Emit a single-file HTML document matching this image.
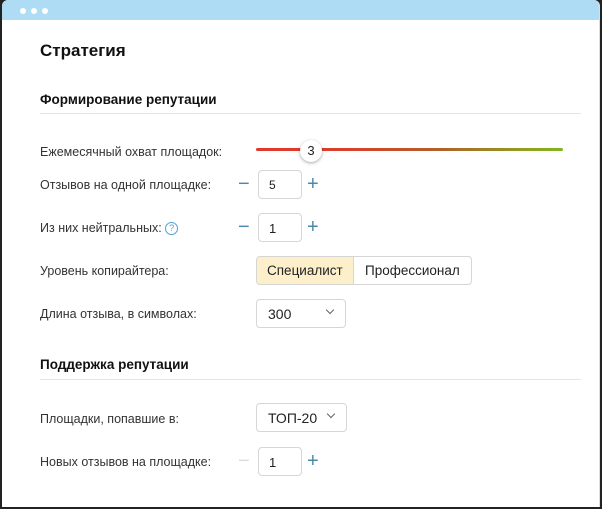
<!DOCTYPE html>
<html><head><meta charset="utf-8"><style>
*{margin:0;padding:0;box-sizing:border-box}
body{width:602px;height:509px;background:#222;font-family:"Liberation Sans",Arial,sans-serif;position:relative;overflow:hidden}
.win{position:absolute;left:2px;top:0;width:598px;height:507px;background:#fff;border-right:1px solid #ddd;border-radius:6px 6px 0 0;overflow:hidden}
.bar{position:absolute;left:0;top:0;right:0;height:20px;background:#aedcf5}
.dot{position:absolute;top:8px;width:6px;height:6px;border-radius:50%;background:#fff}
.abs{position:absolute}
.h1{left:38px;top:41px;font-size:17px;font-weight:bold;color:#111}
.h2{font-size:13.5px;font-weight:bold;color:#111;left:38px}
.hr{left:38px;width:541px;height:1px;background:#dde5ee}
.lbl{left:38px;font-size:12.5px;color:#333}
.inp{width:44px;height:29px;border:1px solid #d6d6d6;border-radius:4px;font-size:13px;color:#222;padding:7px 0 0 10px}
.pm{font-size:20px;color:#4a8aa8;line-height:20px}
.sel{height:29px;border:1px solid #d6d6d6;border-radius:4px;font-size:14px;color:#222;padding:6px 0 0 11px}
.chev{position:absolute;right:12px;top:7px;width:6px;height:6px;border-right:1.2px solid #666;border-bottom:1.2px solid #666;transform:rotate(45deg)}
</style></head><body>
<div class="win">
<div class="bar"><div class="dot" style="left:18px"></div><div class="dot" style="left:29px"></div><div class="dot" style="left:40px"></div></div>
<div class="abs h1">Стратегия</div>
<div class="abs h2" style="top:92px">Формирование репутации</div>
<div class="abs hr" style="top:113px"></div>
<div class="abs lbl" style="top:145px">Ежемесячный охват площадок:</div>
<div class="abs" style="left:254px;top:148px;width:307px;height:3px;border-radius:2px;background:linear-gradient(90deg,#e0392a 0%,#d8402a 30%,#b0602a 60%,#8fa021 88%,#7fb61f 100%)"></div>
<div class="abs" style="left:298px;top:140px;width:22px;height:22px;border-radius:50%;background:#fff;box-shadow:0 1px 3px rgba(0,0,0,.35);font-size:13px;text-align:center;line-height:22px;color:#222">3</div>
<div class="abs lbl" style="top:178px">Отзывов на одной площадке:</div>
<div class="abs pm" style="left:236px;top:174px">−</div>
<div class="abs inp" style="left:256px;top:170px;font-size:12px">5</div>
<div class="abs pm" style="left:305px;top:174px">+</div>
<div class="abs lbl" style="top:221px">Из них нейтральных: <span style="display:inline-block;width:13px;height:13px;border:1px solid #4aa3d8;border-radius:50%;color:#4aa3d8;font-size:9px;text-align:center;line-height:11px;vertical-align:top;margin-top:1px">?</span></div>
<div class="abs pm" style="left:236px;top:217px">−</div>
<div class="abs inp" style="left:256px;top:213px">1</div>
<div class="abs pm" style="left:305px;top:217px">+</div>
<div class="abs lbl" style="top:264px">Уровень копирайтера:</div>
<div class="abs" style="left:254px;top:256px;width:216px;height:29px;border:1px solid #d6d6d6;border-radius:4px;overflow:hidden;font-size:13.5px;color:#222">
<div style="position:absolute;left:0;top:0;width:97px;height:27px;background:#fcefc9;border-right:1px solid #d6d6d6;padding:6px 0 0 10px">Специалист</div>
<div style="position:absolute;left:98px;top:0;padding:6px 0 0 10px">Профессионал</div></div>
<div class="abs lbl" style="top:307px">Длина отзыва, в символах:</div>
<div class="abs sel" style="left:254px;top:299px;width:90px">300<div class="chev"></div></div>
<div class="abs h2" style="top:357px">Поддержка репутации</div>
<div class="abs hr" style="top:379px"></div>
<div class="abs lbl" style="top:412px">Площадки, попавшие в:</div>
<div class="abs sel" style="left:254px;top:403px;width:91px">ТОП-20<div class="chev"></div></div>
<div class="abs lbl" style="top:455px">Новых отзывов на площадке:</div>
<div class="abs pm" style="left:236px;top:451px;color:#d5dde3">−</div>
<div class="abs inp" style="left:256px;top:447px">1</div>
<div class="abs pm" style="left:305px;top:451px">+</div>
</div>
</body></html>
